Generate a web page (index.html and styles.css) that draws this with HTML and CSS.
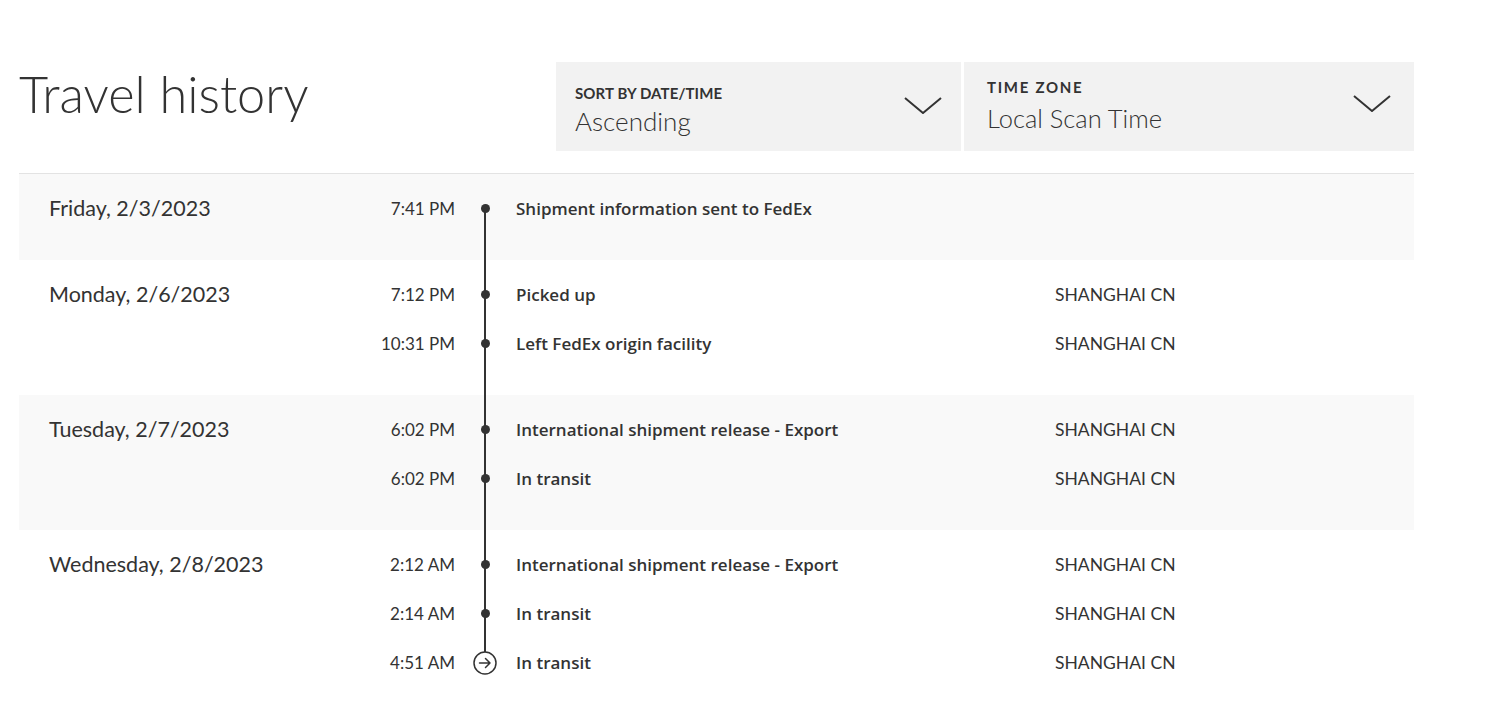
FILE: index.html
```html
<!DOCTYPE html>
<html lang="en">
  <head>
    <meta charset="UTF-8" />
    <meta name="viewport" content="width=device-width, initial-scale=1.0" />
    <title>Travel history</title>
    <link rel="stylesheet" href="styles.css">
  </head>
  <body>
    <main class="history">
      <div class="history-header">
        <h1>Travel history</h1>
        <div class="filters">
          <div class="select select-sort">
            <div class="select-text">
              <span class="select-label">SORT BY DATE/TIME</span>
              <span class="select-value">Ascending</span>
            </div>
            <svg class="chevron" width="38" height="17" viewBox="0 0 38 17">
              <polyline points="1,1 19,16 37,1" fill="none" stroke="#333" stroke-width="2" />
            </svg>
          </div>
          <div class="select select-zone">
            <div class="select-text">
              <span class="select-label spaced">TIME ZONE</span>
              <span class="select-value">Local Scan Time</span>
            </div>
            <svg class="chevron" width="38" height="17" viewBox="0 0 38 17">
              <polyline points="1,1 19,16 37,1" fill="none" stroke="#333" stroke-width="2" />
            </svg>
          </div>
        </div>
      </div>

      <div class="days">
        <section class="day shaded">
          <div class="day-date">Friday, 2/3/2023</div>
          <div class="events">
            <div class="event">
              <span class="time">7:41 PM</span>
              <span class="mark"><i class="dot"></i></span>
              <span class="desc">Shipment information sent to FedEx</span>
              <span class="place"></span>
            </div>
          </div>
        </section>

        <section class="day">
          <div class="day-date">Monday, 2/6/2023</div>
          <div class="events">
            <div class="event">
              <span class="time">7:12 PM</span>
              <span class="mark"><i class="dot"></i></span>
              <span class="desc">Picked up</span>
              <span class="place">SHANGHAI CN</span>
            </div>
            <div class="event">
              <span class="time">10:31 PM</span>
              <span class="mark"><i class="dot"></i></span>
              <span class="desc">Left FedEx origin facility</span>
              <span class="place">SHANGHAI CN</span>
            </div>
          </div>
        </section>

        <section class="day shaded">
          <div class="day-date">Tuesday, 2/7/2023</div>
          <div class="events">
            <div class="event">
              <span class="time">6:02 PM</span>
              <span class="mark"><i class="dot"></i></span>
              <span class="desc">International shipment release - Export</span>
              <span class="place">SHANGHAI CN</span>
            </div>
            <div class="event">
              <span class="time">6:02 PM</span>
              <span class="mark"><i class="dot"></i></span>
              <span class="desc">In transit</span>
              <span class="place">SHANGHAI CN</span>
            </div>
          </div>
        </section>

        <section class="day">
          <div class="day-date">Wednesday, 2/8/2023</div>
          <div class="events">
            <div class="event">
              <span class="time">2:12 AM</span>
              <span class="mark"><i class="dot"></i></span>
              <span class="desc">International shipment release - Export</span>
              <span class="place">SHANGHAI CN</span>
            </div>
            <div class="event">
              <span class="time">2:14 AM</span>
              <span class="mark"><i class="dot"></i></span>
              <span class="desc">In transit</span>
              <span class="place">SHANGHAI CN</span>
            </div>
            <div class="event">
              <span class="time">4:51 AM</span>
              <span class="mark">
                <svg class="current" width="24" height="24" viewBox="0 0 24 24">
                  <circle cx="12" cy="12" r="11" fill="#fff" stroke="#333" stroke-width="1.5" />
                  <path d="M6.5 12h10.5M12.5 7.5l4.5 4.5-4.5 4.5" fill="none" stroke="#333" stroke-width="1.5" stroke-linecap="round" stroke-linejoin="round" />
                </svg>
              </span>
              <span class="desc">In transit</span>
              <span class="place">SHANGHAI CN</span>
            </div>
          </div>
        </section>
      </div>
    </main>
  </body>
</html>
```

FILE: styles.css
```css
/* Global styles */
* {
  margin: 0;
  padding: 0;
  box-sizing: border-box;
  font-family: "Lato", "Open Sans", sans-serif;
}

body {
  background-color: #ffffff;
  color: #333;
}

.history {
  width: 1395px;
  margin-left: 19px;
  padding-top: 62px;
}

/* Header */
.history-header {
  display: flex;
  align-items: flex-start;
  padding-bottom: 22px;
  border-bottom: 1px solid #e3e3e3;
}

h1 {
  width: 537px;
  font-size: 50.5px;
  font-weight: 300;
  line-height: 1;
  margin-top: 7px;
  color: #333;
}

.filters {
  display: flex;
  gap: 3px;
  flex: 1;
}

.select {
  height: 89px;
  background: #f2f2f2;
  display: flex;
  align-items: center;
  justify-content: space-between;
}

.select-sort {
  width: 405px;
  padding: 0 19px;
}

.select-sort .select-text {
  margin-top: 7px;
}

.select-sort .chevron {
  margin-bottom: 2px;
}

.select-zone {
  flex: 1;
  padding: 0 23px;
}

.select-zone .select-text {
  margin-bottom: 2px;
}

.select-zone .chevron {
  margin-bottom: 6px;
}

.select-text {
  display: flex;
  flex-direction: column;
}

.select-label {
  font-size: 15px;
  font-weight: 700;
  letter-spacing: 0.1px;
  line-height: 18px;
}

.select-label.spaced {
  letter-spacing: 1.7px;
}

.select-value {
  font-size: 26px;
  font-weight: 300;
  line-height: 30px;
  margin-top: 4px;
}

.select-zone .select-value {
  font-size: 25.5px;
  margin-top: 7px;
}

.chevron {
  display: block;
}

/* Days */
.day {
  display: flex;
  padding: 10px 0 27px 30px;
}

.day.shaded {
  background: #f9f9f9;
}

.day-date {
  width: 250px;
  font-size: 21.5px;
  line-height: 49px;
}

.events {
  flex: 1;
}

.event {
  display: flex;
  align-items: center;
  height: 49px;
  font-size: 17px;
}

.time {
  width: 156px;
  text-align: right;
}

.mark {
  width: 60px;
  align-self: stretch;
  position: relative;
  display: flex;
  align-items: center;
  justify-content: center;
}

.mark::before {
  content: "";
  position: absolute;
  left: 29px;
  width: 2px;
  top: 0;
  bottom: 0;
  background: #333;
}

.event:first-child .mark::before {
  top: -10px;
}

.event:last-child .mark::before {
  bottom: -27px;
}

.day:first-child .event:first-child .mark::before {
  top: 50%;
}

.day:last-child .event:last-child .mark::before {
  bottom: 50%;
}

.dot {
  width: 9px;
  height: 9px;
  border-radius: 50%;
  background: #333;
  position: relative;
}

.current {
  position: relative;
  display: block;
}

.desc {
  width: 540px;
  font-family: "Open Sans", sans-serif;
  font-weight: 600;
  font-size: 17px;
  padding-left: 1px;
}

.place {
  flex: 1;
  font-size: 17.5px;
}
```
